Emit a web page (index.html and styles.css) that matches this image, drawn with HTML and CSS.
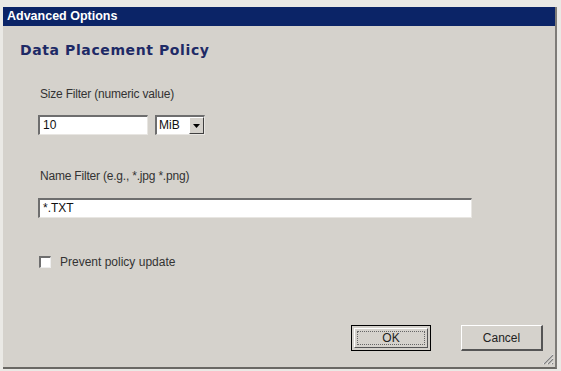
FILE: index.html
```html
<html>
    <head>
        <link rel="stylesheet" href="styles.css">
    </head>
    <body>
        <div class="window">
            <div class="titlebar">Advanced Options</div>
            <div class="content">
                <h1>Data Placement Policy</h1>
                <div class="fields">
                    <div class="label">Size Filter (numeric value)</div>
                    <div class="row">
                        <div class="textbox size">10</div>
                        <div class="combo">
                            <span class="combo-text">MiB</span>
                            <span class="combo-btn">
                                <svg width="7" height="4" viewBox="0 0 7 4"><path d="M0 0h7L3.5 4z" fill="#000"/></svg>
                            </span>
                        </div>
                    </div>
                    <div class="label name-label">Name Filter (e.g., *.jpg *.png)</div>
                    <div class="textbox name">*.TXT</div>
                    <label class="check">
                        <span class="box"></span>
                        Prevent policy update
                    </label>
                </div>
                <div class="buttons">
                    <div class="btn default"><span>OK</span></div>
                    <div class="btn">Cancel</div>
                </div>
                <div class="grip">
                    <svg width="13" height="13" viewBox="0 0 13 13">
                        <path d="M12 2L2 12M12 6L6 12M12 10L10 12" stroke="#fff" stroke-width="1"/>
                        <path d="M12 3L3 12M12 7L7 12M12 11L11 12" stroke="#808080" stroke-width="1.2"/>
                    </svg>
                </div>
            </div>
        </div>
    </body>
</html>
```

FILE: styles.css
```css
body
{
    margin: 0;
    padding: 6px 4px 0 3px;
    background-color: #eae9e5;
    font-family: "Liberation Sans", Arial, sans-serif;
}

.window
{
    width: 552px;
    height: 360px;
    background-color: #d5d2cc;
    border-right: 2px solid #7e7c78;
    border-bottom: 2px solid #6a6864;
    box-sizing: content-box;
}

.titlebar
{
    margin-top: 1px;
    height: 19px;
    line-height: 19px;
    padding-left: 4px;
    background-color: #0b2467;
    color: #fff;
    font-weight: bold;
    font-size: 12.5px;
}

.content
{
    position: relative;
    height: 340px;
}

h1
{
    margin: 0;
    padding: 16px 0 0 17px;
    font-family: "DejaVu Sans", Verdana, sans-serif;
    font-size: 14px;
    font-weight: bold;
    letter-spacing: 0.6px;
    color: #1e2a66;
}

.fields
{
    padding-left: 35px;
}

.label
{
    margin-top: 29px;
    padding-left: 2px;
    font-size: 12px;
    color: #333;
    letter-spacing: -0.2px;
}

.name-label
{
    margin-top: 34px;
}

.row
{
    display: flex;
    gap: 7px;
    margin-top: 14px;
}

.textbox
{
    height: 20px;
    padding-left: 3px;
    box-sizing: border-box;
    background-color: #fff;
    border-top: 2px solid #6e6e6e;
    border-left: 2px solid #6e6e6e;
    border-right: 1px solid #e8e6e2;
    border-bottom: 1px solid #e8e6e2;
    font-size: 12px;
    line-height: 17px;
    color: #111;
}

.size
{
    width: 110px;
}

.name
{
    width: 434px;
    margin-top: 15px;
}

.combo
{
    display: flex;
    width: 50px;
    height: 20px;
    box-sizing: border-box;
    background-color: #fff;
    border-top: 2px solid #6e6e6e;
    border-left: 2px solid #6e6e6e;
    border-right: 1px solid #e8e6e2;
    border-bottom: 1px solid #e8e6e2;
}

.combo-text
{
    flex: 1;
    padding-left: 2px;
    font-size: 12px;
    line-height: 17px;
    color: #111;
}

.combo-btn
{
    width: 15px;
    display: flex;
    align-items: center;
    justify-content: center;
    background-color: #d5d2cc;
    border-right: 1px solid #404040;
    border-bottom: 1px solid #404040;
    border-top: 1px solid #fff;
    border-left: 1px solid #fff;
    box-sizing: border-box;
}

.check
{
    display: flex;
    align-items: center;
    gap: 9px;
    margin-top: 37px;
    padding-left: 1px;
    font-size: 12px;
    color: #333;
}

.box
{
    width: 12px;
    height: 12px;
    box-sizing: border-box;
    background-color: #fff;
    border-top: 2px solid #6e6e6e;
    border-left: 2px solid #6e6e6e;
    border-right: 1px solid #eee;
    border-bottom: 1px solid #eee;
}

.buttons
{
    display: flex;
    gap: 30px;
    padding-left: 348px;
    margin-top: 56px;
}

.btn
{
    width: 82px;
    height: 26px;
    box-sizing: border-box;
    display: flex;
    align-items: center;
    justify-content: center;
    border-top: 1px solid #fff;
    border-left: 1px solid #fff;
    border-right: 2px solid #555;
    border-bottom: 2px solid #555;
    font-size: 12px;
    color: #222;
}

.default
{
    width: 80px;
    border: 1px solid #000;
    padding: 2px;
}

.default span
{
    width: 100%;
    height: 100%;
    display: flex;
    align-items: center;
    justify-content: center;
    border-top: 1px solid #fff;
    border-left: 1px solid #fff;
    border-right: 1px solid #555;
    border-bottom: 1px solid #555;
    outline: 1px dotted #666;
    outline-offset: -4px;
    box-sizing: border-box;
}

.grip
{
    position: absolute;
    right: 1px;
    bottom: 1px;
    width: 13px;
    height: 13px;
}
```
